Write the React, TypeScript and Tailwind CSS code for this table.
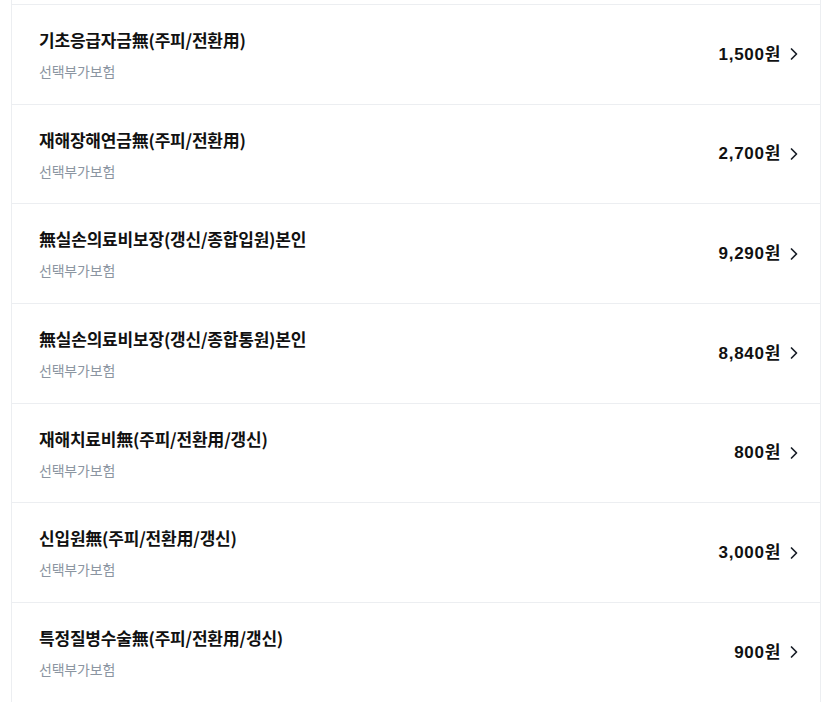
import React from "react";

const items = [
  { t: "기초응급자금無(주피/전환用)", p: "1,500원" },
  { t: "재해장해연금無(주피/전환用)", p: "2,700원" },
  { t: "無실손의료비보장(갱신/종합입원)본인", p: "9,290원" },
  { t: "無실손의료비보장(갱신/종합통원)본인", p: "8,840원" },
  { t: "재해치료비無(주피/전환用/갱신)", p: "800원" },
  { t: "신입원無(주피/전환用/갱신)", p: "3,000원" },
  { t: "특정질병수술無(주피/전환用/갱신)", p: "900원" },
];

function Chevron() {
  return (
    <svg width="10" height="16" viewBox="0 0 10 16" fill="none">
      <path d="M2.5 3 L7.5 8 L2.5 13" stroke="#191f28" strokeWidth="1.7" strokeLinecap="round" strokeLinejoin="round" />
    </svg>
  );
}

export default function App() {
  return (
    <div
      className="w-[822px] h-[710px] overflow-hidden bg-white"
      style={{ fontFamily: '"Noto Sans CJK KR", "Noto Sans", sans-serif' }}
    >
      <div className="ml-[11px] w-[810px] border-x border-[#eceef1]">
        <div className="h-[4px]" />
        {items.map((it, i) => (
          <div key={i} className="flex items-center border-t border-[#eceef1] h-[99.7px] pl-[27px] pr-[21px]">
            <div className="flex flex-col flex-1">
              <div className="text-[17px] leading-[24px] font-bold text-[#111111] tracking-[-0.2px]">{it.t}</div>
              <div className="mt-[9px] text-[14px] leading-[20px] text-[#8b95a1] tracking-[-0.2px]">선택부가보험</div>
            </div>
            <div className="flex items-center gap-[8px]">
              <span
                className="text-[17px] font-bold text-[#111111] tracking-[0.7px]"
                style={{ fontFamily: '"Liberation Sans", "Noto Sans CJK KR", sans-serif' }}
              >
                {it.p}
              </span>
              <Chevron />
            </div>
          </div>
        ))}
      </div>
    </div>
  );
}
